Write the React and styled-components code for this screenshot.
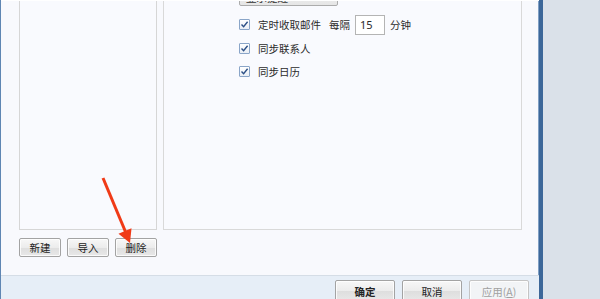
import React from 'react';
import styled, { createGlobalStyle } from 'styled-components';

const GlobalStyle = createGlobalStyle`
    html, body {
        margin: 0;
        padding: 0;
        width: 600px;
        height: 299px;
        overflow: hidden;
        background: #dae1e9;
    }
    * {
        box-sizing: border-box;
    }
`;

const Screen = styled.div`
    position: relative;
    display: flex;
    width: 600px;
    height: 299px;
    overflow: hidden;
    font-family: 'Noto Sans CJK SC', 'Noto Sans', sans-serif;
    font-size: 10.5px;
    color: #2b2b2b;
`;

const Dialog = styled.div`
    width: 543px;
    display: flex;
    flex-direction: column;
    border-left: 1px solid #5f86b3;
    border-right: 4px solid #3c6799;
    box-shadow: inset -1px 0 0 #7f9fc4;
    background: #f8f9fd;
`;

const Body = styled.div`
    flex: 1;
    display: flex;
    flex-direction: column;
    padding: 0 17px 18px 18px;
    overflow: hidden;
    border-top: 1px solid #ffffff;
`;

const Panels = styled.div`
    flex: 1;
    display: flex;
    gap: 6px;
    margin-top: -30px;
`;

const ListBox = styled.div`
    width: 138px;
    border: 1px solid #d6d6d6;
    background: #f9fafe;
`;

const OptionsPanel = styled.div`
    flex: 1;
    display: flex;
    flex-direction: column;
    border: 1px solid #d9d9d9;
    background: #f9fafe;
    padding-left: 75px;
`;

const Select = styled.div`
    width: 99px;
    height: 22px;
    margin-top: 12px;
    border: 1px solid #acacac;
    border-radius: 2px;
    background: linear-gradient(#f4f4f4, #e6e6e6);
    padding: 0 6px;
    line-height: 26px;
    color: #333;
    overflow: hidden;
`;

const OptionRow = styled.label`
    display: flex;
    align-items: center;
    height: 23.5px;
    gap: 8px;
    margin-top: ${({ first }) => (first ? '7px' : '0')};
`;

const Box = styled.span`
    width: 11px;
    height: 11px;
    flex: none;
    border: 1px solid #8aa5c8;
    border-radius: 1px;
    background: linear-gradient(#ffffff, #e9eef5);
    display: flex;
    align-items: center;
    justify-content: center;
`;

const Interval = styled.span`
    display: flex;
    align-items: center;
    gap: 5px;
`;

const NumberInput = styled.span`
    width: 30px;
    height: 20px;
    border: 1px solid #b4b4b4;
    background: #ffffff;
    padding-left: 4px;
    line-height: 18px;
    font-family: 'Noto Sans', sans-serif;
    font-size: 11px;
`;

const ListButtons = styled.div`
    display: flex;
    gap: 6px;
    margin-top: 8px;
`;

const Button = styled.button`
    height: ${({ $tall }) => ($tall ? '22px' : '19px')};
    width: ${({ $wide }) => ($wide ? '60px' : '42px')};
    padding: 0;
    border: 1px solid ${({ disabled }) => (disabled ? '#c4c4c4' : '#a3a3a3')};
    border-radius: 2px;
    background: ${({ disabled }) =>
        disabled ? '#f2f4f6' : 'linear-gradient(#f7f7f7 0%, #ececec 50%, #dedede 51%, #e8e8e8 100%)'};
    box-shadow: inset 0 0 0 1px rgba(255, 255, 255, 0.8);
    font-family: 'Noto Sans CJK SC', 'Noto Sans', sans-serif;
    font-size: 10.5px;
    font-weight: ${({ $strong }) => ($strong ? 700 : 400)};
    color: ${({ disabled }) => (disabled ? '#a0a0a0' : '#222')};
`;

const Footer = styled.div`
    height: 24px;
    display: flex;
    justify-content: flex-end;
    gap: 7px;
    padding: 4px 10px 0 0;
    background: #e6eef7;
    border-top: 1px solid #d5dde6;
`;

const Arrow = styled.svg`
    position: absolute;
    left: 0;
    top: 0;
    pointer-events: none;
`;

const Check = () => (
    <Box>
        <svg width="9" height="9" viewBox="0 0 9 9">
            <path d="M1.5 4.6 L3.6 6.8 L7.6 1.8" fill="none" stroke="#2c4f86" strokeWidth="1.4" />
        </svg>
    </Box>
);

export default function App() {
    return (
        <Screen>
            <GlobalStyle />
            <Dialog>
                <Body>
                    <Panels>
                        <ListBox />
                        <OptionsPanel>
                            <Select>显示提醒</Select>
                            <OptionRow first>
                                <Check />
                                <span>定时收取邮件</span>
                                <Interval>
                                    每隔
                                    <NumberInput>15</NumberInput>
                                    分钟
                                </Interval>
                            </OptionRow>
                            <OptionRow>
                                <Check />
                                <span>同步联系人</span>
                            </OptionRow>
                            <OptionRow>
                                <Check />
                                <span>同步日历</span>
                            </OptionRow>
                        </OptionsPanel>
                    </Panels>
                    <ListButtons>
                        <Button>新建</Button>
                        <Button>导入</Button>
                        <Button>删除</Button>
                    </ListButtons>
                </Body>
                <Footer>
                    <Button $wide $tall $strong>确定</Button>
                    <Button $wide $tall>取消</Button>
                    <Button $wide $tall disabled>应用(<u>A</u>)</Button>
                </Footer>
            </Dialog>
            <Arrow width="600" height="299">
                <line x1="103" y1="178" x2="126" y2="233" stroke="#f03a17" strokeWidth="3" />
                <polygon points="130,243 118.5,233.7 131.5,228.3" fill="#f03a17" />
            </Arrow>
        </Screen>
    );
}
